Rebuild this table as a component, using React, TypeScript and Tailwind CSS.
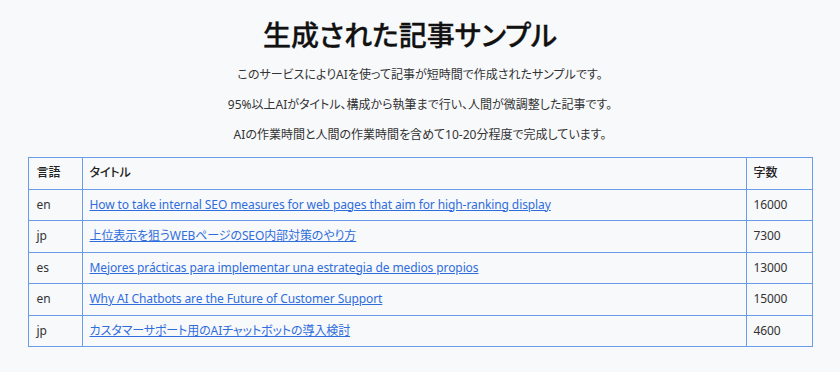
export default function App() {
  const rows = [
    { lang: 'en', title: 'How to take internal SEO measures for web pages that aim for high-ranking display', count: '16000' },
    { lang: 'jp', title: '上位表示を狙うWEBページのSEO内部対策のやり方', count: '7300' },
    { lang: 'es', title: 'Mejores prácticas para implementar una estrategia de medios propios', count: '13000' },
    { lang: 'en', title: 'Why AI Chatbots are the Future of Customer Support', count: '15000' },
    { lang: 'jp', title: 'カスタマーサポート用のAIチャットボットの導入検討', count: '4600' },
  ];

  return (
    <div className="min-h-screen bg-[#f8f9fb] text-[#222] font-['Noto_Sans','Noto_Sans_CJK_JP',sans-serif] [font-feature-settings:'palt']">
      {/* Heading */}
      <h1 className="pt-[14px] pr-[20px] text-center text-[28px] leading-[42px] font-medium text-[#111] [-webkit-text-stroke:0.3px_#111]">
        生成された記事サンプル
      </h1>
      <div className="mt-[9px] space-y-[10px] text-center text-[12px] leading-[20px] text-[#333]">
        <p>このサービスによりAIを使って記事が短時間で作成されたサンプルです。</p>
        <p>95%以上AIがタイトル、構成から執筆まで行い、人間が微調整した記事です。</p>
        <p>AIの作業時間と人間の作業時間を含めて10-20分程度で完成しています。</p>
      </div>

      {/* Table */}
      <table className="mx-auto mt-[12px] w-[785px] border-collapse text-[12px] leading-[18.5px] tracking-[-0.1px]">
        <thead>
          <tr>
            <th className="w-[54px] border border-[#6b9ce9] px-2 py-[6px] text-left font-medium">言語</th>
            <th className="border border-[#6b9ce9] px-[7px] py-[6px] text-left font-medium">タイトル</th>
            <th className="w-[66px] border border-[#6b9ce9] px-[7px] py-[6px] text-left font-medium">字数</th>
          </tr>
        </thead>
        <tbody>
          {rows.map((row, i) => (
            <tr key={i}>
              <td className="border border-[#6b9ce9] px-2 py-[6px] text-[#333]">{row.lang}</td>
              <td className="border border-[#6b9ce9] px-[7px] py-[6px]">
                <a href="#" className="text-[#2f6ddc] underline">
                  {row.title}
                </a>
              </td>
              <td className="border border-[#6b9ce9] px-[7px] py-[6px] text-[#333]">{row.count}</td>
            </tr>
          ))}
        </tbody>
      </table>
    </div>
  );
}
